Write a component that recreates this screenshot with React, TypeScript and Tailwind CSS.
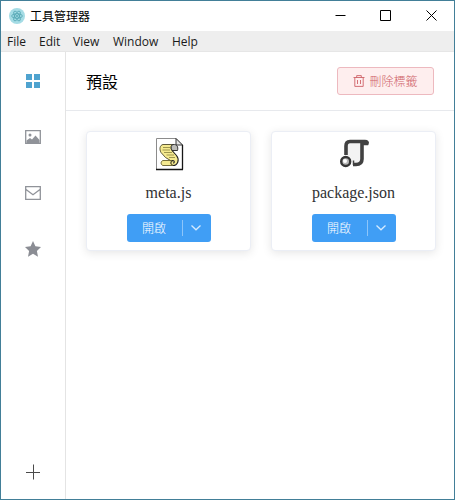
import React from "react";

const zh = "font-['Noto_Sans_CJK_TC',sans-serif]";

function AppLogo() {
  return (
    <svg width="16" height="16" viewBox="0 0 16 16" fill="none">
      <circle cx="8" cy="8" r="8" fill="#a5dce5" />
      <g stroke="#4fa3b0" strokeWidth="0.8">
        <ellipse cx="8" cy="8" rx="5.4" ry="2.2" />
        <ellipse cx="8" cy="8" rx="5.4" ry="2.2" transform="rotate(60 8 8)" />
        <ellipse cx="8" cy="8" rx="5.4" ry="2.2" transform="rotate(120 8 8)" />
      </g>
      <circle cx="8" cy="8" r="0.9" fill="#4fa3b0" />
    </svg>
  );
}

function ScriptFileIcon() {
  return (
    <svg width="32" height="34" viewBox="-1 0 32 34">
      <path d="M2.5 1.5H22L28.5 8V32.5H2.5Z" fill="#fff" stroke="#8c8c8c" />
      <path d="M28.500 8V32.500M2 32.500H29" stroke="#161616" strokeWidth="1.3" />
      <path d="M22 1.5V8H28.500Z" fill="#e4e4e4" stroke="#222" strokeWidth="0.9" />
      <path
        d="M9 7.500H19C16.500 9 16.500 11.500 18 13.500L22 18.500C24.500 22 23 24.500 20 23.500H16.500L11.500 20.500L7 15.500C5 12 6 8 9 7.500Z"
        fill="#f5ea90"
        stroke="#4d482a"
        strokeWidth="0.9"
      />
      <path
        d="M19 7.500C23 7 24.500 10 23.500 13.500L18 13.500C16.500 10.500 17 8 19 7.500Z"
        fill="#bcbcb8"
        stroke="#222"
        strokeWidth="0.9"
      />
      <path d="M18 13.500L22.500 18.500C26 23 23.500 28.500 19 28.500C16 28 16 24 19 23.500C21 24 20.500 26 19 26" fill="#f5ea90" stroke="#222" strokeWidth="1.1" />
      <path d="M18 23.500H9C6.500 24 6.500 28 9 28.500H19C16 27.500 16 25 18 23.500Z" fill="#f5ea90" stroke="#66602c" strokeWidth="0.9" />
      <path d="M9 10.500H16M8.500 13H16M10 15.500H18M12.500 18H20M15 20.500H21" stroke="#88803e" strokeWidth="0.8" />
    </svg>
  );
}

function JsonFileIcon() {
  return (
    <svg width="32" height="34" viewBox="0 0 32 34" fill="none">
      <path d="M8 5H24V26H16L9 19Z" fill="#f3f3f3" />
      <path
        d="M8 18V9C8 6 9 4.500 12 4.500H27C29 4.500 29.500 5.500 29 6.500H24V22C24 26 22 27.500 18 27.500H15"
        stroke="#414141"
        strokeWidth="3.600"
      />
      <path d="M15.500 23.500V28" stroke="#414141" strokeWidth="1.500" />
      <circle cx="7.700" cy="24.500" r="5.800" fill="#fff" />
      <circle cx="7.700" cy="24.500" r="4.500" fill="#b9b9b9" stroke="#363636" strokeWidth="2.400" />
      <circle cx="7" cy="24" r="2" fill="#fff" />
    </svg>
  );
}

function OpenButton() {
  return (
    <div className="flex h-7 w-[84px] shrink-0 items-center rounded-[3px] bg-[#409ef5] text-white">
      <button className={`h-7 w-[55px] text-center text-[12px] leading-[26px] font-light ${zh}`}>開啟</button>
      <span className="h-4 w-px bg-[#8dc5fa]" />
      <button className="flex h-7 flex-1 items-center justify-center" aria-label="▾">
        <svg width="12" height="12" viewBox="0 0 12 12" fill="none" stroke="#d4eaff" strokeWidth="1.300">
          <path d="M0.500 3.500L5 7.800L9.500 3.500" />
        </svg>
      </button>
    </div>
  );
}

function FileCard({ name, icon }: { name: string; icon: React.ReactNode }) {
  return (
    <div className="flex h-[120px] w-[165px] shrink-0 flex-col items-center rounded-[4px] border border-[#ebeef5] bg-white pt-[5px] shadow-[0_2px_10px_rgba(0,0,0,0.1)]">
      <div className="h-[34px]">{icon}</div>
      <div className="mt-[10px] mb-[9px] h-6 font-['Liberation_Serif',serif] text-[16px] leading-6 text-[#303133]">
        {name}
      </div>
      <OpenButton />
    </div>
  );
}

export default function App() {
  return (
    <div className="flex h-[500px] w-[455px] flex-col border border-[#427f98] bg-white text-black">
      <header className="flex h-[30px] shrink-0 items-center pl-2">
        <AppLogo />
        <span className={`ml-[5px] text-[12px] leading-[28px] ${zh}`}>工具管理器</span>
        <div className="mr-[17px] mb-[2px] ml-auto flex items-center">
          <svg className="mr-[34px]" width="11" height="11" viewBox="0 0 11 11" stroke="#000" fill="none">
            <path d="M0.500 5.500H10.500" />
          </svg>
          <svg className="mr-[35px]" width="11" height="11" viewBox="0 0 11 11" stroke="#000" fill="none">
            <path d="M0.500 0.500H10.500V10.500H0.500Z" />
          </svg>
          <svg width="11" height="11" viewBox="0 0 11 11" stroke="#000" fill="none">
            <path d="M0.500 0.500L10.500 10.500M10.500 0.500L0.500 10.500" />
          </svg>
        </div>
      </header>

      <nav className="flex h-[21px] shrink-0 border-b border-[#e6e6e6] bg-[#eeeeee] pl-[6px] font-['Open_Sans',sans-serif] text-[12px] leading-[21px] text-[#1a1a1a]">
        <span className="w-8">File</span>
        <span className="w-[34px]">Edit</span>
        <span className="w-10">View</span>
        <span className="w-[59px]">Window</span>
        <span>Help</span>
      </nav>

      <div className="flex min-h-0 flex-1">
        <aside className="flex w-[65px] shrink-0 flex-col items-center border-r border-[#e4e4e4] pt-[21px] pb-[19px]">
          <div className="flex flex-col gap-10">
            <svg width="16" height="16" viewBox="0 0 16 16" fill="#4fa3cf">
              <path d="M1 1H7V7H1ZM9 1H15V7H9ZM1 9H7V15H1ZM9 9H15V15H9Z" />
            </svg>
            <svg width="16" height="16" viewBox="0 0 16 16" fill="none">
              <path d="M0.700 1.700H15.300V14.300H0.700Z" stroke="#909399" strokeWidth="1.300" />
              <circle cx="5" cy="6" r="1.500" fill="#909399" />
              <path d="M1.500 14V11.500L5 9L7 10.500L10.500 6.500L14.500 11V14Z" fill="#909399" />
            </svg>
            <svg width="16" height="16" viewBox="0 0 16 16" fill="none" stroke="#909399" strokeWidth="1.300">
              <path d="M0.700 1.700H15.300V14.300H0.700ZM0.700 4.200L8 9.800L15.300 4.200" />
            </svg>
            <svg width="16" height="16" viewBox="0 0 16 16" fill="#8b8d94">
              <path d="M8 0L10.400 5.300L16 6L11.900 9.900L13 15.700L8 12.800L3 15.700L4.100 9.900L0 6L5.600 5.300Z" />
            </svg>
          </div>
          <svg className="mt-auto" width="16" height="16" viewBox="0 0 16 16" stroke="#4a4a4a" fill="none">
            <path d="M8.500 0.500V15.500M1 8.500H15" />
          </svg>
        </aside>

        <main className="min-w-0 flex-1">
          <div className="flex h-[59px] items-center border-b border-[#e7e9ed] pr-5 pl-5">
            <h1 className={`text-[16px] leading-6 ${zh}`}>預設</h1>
            <button className="ml-auto flex h-7 w-[97px] items-center justify-center gap-1 rounded-[3px] border border-[#edb9bf] bg-[#feeeee] text-[#cf6268]">
              <svg width="12" height="12" viewBox="0 0 12 12" fill="none" stroke="currentColor" strokeWidth="0.900">
                <path d="M0.500 2.500H11.500M3.700 2.500V0.600H8.300V2.500M1.800 2.500V11.400H10.200V2.500M4.500 5V9M7.500 5V9" />
              </svg>
              <span className={`text-[12px] leading-[26px] font-light ${zh}`}>刪除標籤</span>
            </button>
          </div>
          <div className="flex gap-5 px-5 pt-5">
            <FileCard name="meta.js" icon={<ScriptFileIcon />} />
            <FileCard name="package.json" icon={<JsonFileIcon />} />
          </div>
        </main>
      </div>
    </div>
  );
}
